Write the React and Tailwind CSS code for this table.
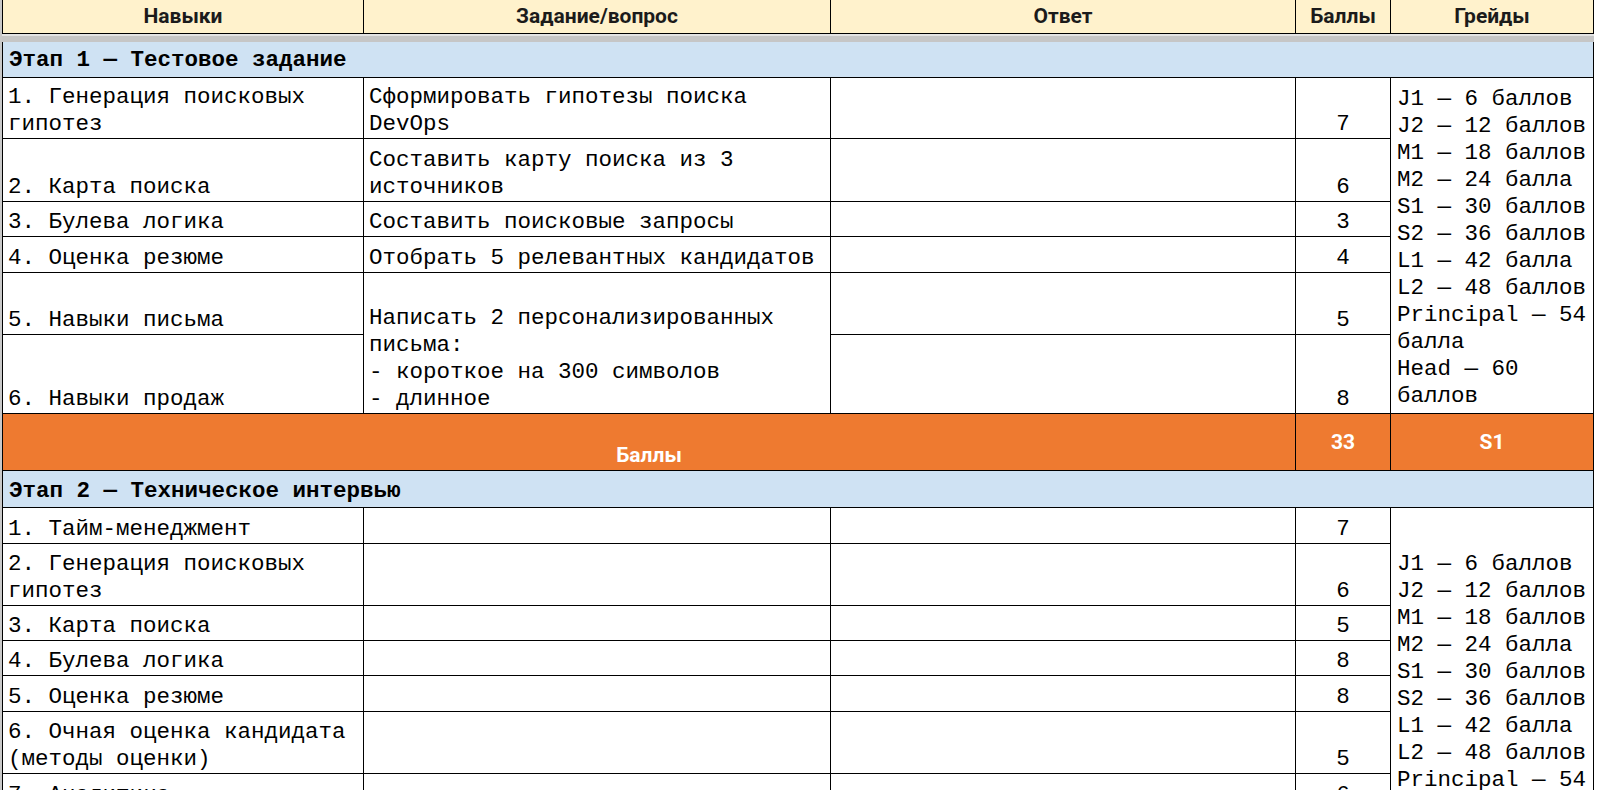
const stage1 = [
  { skill: '1. Генерация поисковых гипотез', task: 'Сформировать гипотезы поиска DevOps', score: 7 },
  { skill: '2. Карта поиска', task: 'Составить карту поиска из 3 источников', score: 6 },
  { skill: '3. Булева логика', task: 'Составить поисковые запросы', score: 3 },
  { skill: '4. Оценка резюме', task: 'Отобрать 5 релевантных кандидатов', score: 4 },
];

const stage2 = [
  { skill: '1. Тайм-менеджмент', score: 7 },
  { skill: '2. Генерация поисковых гипотез', score: 6 },
  { skill: '3. Карта поиска', score: 5 },
  { skill: '4. Булева логика', score: 8 },
  { skill: '5. Оценка резюме', score: 8 },
  { skill: '6. Очная оценка кандидата (методы оценки)', score: 5 },
  { skill: '7. Аналитика', score: 6 },
  { skill: '8. Презентация результатов', score: 5 },
];

const grades = [
  'J1 — 6 баллов',
  'J2 — 12 баллов',
  'M1 — 18 баллов',
  'M2 — 24 балла',
  'S1 — 30 баллов',
  'S2 — 36 баллов',
  'L1 — 42 балла',
  'L2 — 48 баллов',
  'Principal — 54 балла',
  'Head — 60 баллов',
];

function Cell({ children, className = '' }) {
  return (
    <div className={`bg-white flex flex-col justify-end px-[5px] overflow-hidden ${className}`}>
      {children}
    </div>
  );
}

function Grades({ className = '' }) {
  return (
    <Cell className={`pl-[6px] pr-[2px] pb-[3px] ${className}`}>
      {grades.map((g) => (
        <div key={g}>{g}</div>
      ))}
    </Cell>
  );
}

function Row({ r, extra }) {
  return (
    <>
      <Cell>{r.skill}</Cell>
      <Cell>{r.task}</Cell>
      <Cell />
      <Cell className="items-center">{r.score}</Cell>
      {extra}
    </>
  );
}

export default function App() {
  const orange = "bg-[#ee7a30] font-['Roboto',sans-serif] font-bold text-[21px] text-white";
  return (
    <div className="h-[790px] w-[1600px] overflow-hidden bg-white font-['Liberation_Mono',monospace] text-[22.5px] leading-[27px] text-black">
      <div className="flex">
        <div className="w-[2px] shrink-0 bg-[#c9c9c9]" />
        <div className="w-[1592px] shrink-0">
          {/* Header */}
          <div className="grid grid-cols-[360px_466px_464px_94px_202px] h-[34px] gap-x-px bg-black px-px pb-px font-['Roboto',sans-serif] font-bold text-[21px] text-[#1b1b1b]">
            {['Навыки', 'Задание/вопрос', 'Ответ', 'Баллы', 'Грейды'].map((h) => (
              <div key={h} className="bg-[#fff2cc] flex items-center justify-center">
                {h}
              </div>
            ))}
          </div>
          <div className="h-[2px] bg-[#e4e4e4]" />
          <div className="h-[6px] bg-[#c6c6c6]" />

          {/* Body */}
          <div className="grid grid-cols-[360px_466px_464px_94px_202px] grid-rows-[35px_60px_62px_34px_35px_61px_78px_56px_36px_35px_61px_34px_34px_35px_61px_35px_68px] gap-px bg-black px-px pb-px">
            <div className="col-span-5 bg-[#cfe2f3] flex items-center px-[6px] pt-[2px] font-bold">
              Этап 1 — Тестовое задание
            </div>

            {stage1.map((r, i) => (
              <Row key={r.skill} r={r} extra={i === 0 ? <Grades className="row-span-6" /> : null} />
            ))}

            <Cell>5. Навыки письма</Cell>
            <Cell className="row-span-2 whitespace-pre-line">
              {'Написать 2 персонализированных письма:\n- короткое на 300 символов\n- длинное'}
            </Cell>
            <Cell />
            <Cell className="items-center">5</Cell>

            <Cell>6. Навыки продаж</Cell>
            <Cell />
            <Cell className="items-center">8</Cell>

            <div className={`col-span-3 flex items-end justify-center pb-[1px] ${orange}`}>Баллы</div>
            <div className={`flex items-center justify-center ${orange}`}>33</div>
            <div className={`flex items-center justify-center ${orange}`}>S1</div>

            <div className="col-span-5 bg-[#cfe2f3] flex items-center px-[6px] pt-[4px] font-bold">
              Этап 2 — Техническое интервью
            </div>

            {stage2.map((r, i) => (
              <Row key={r.skill} r={r} extra={i === 0 ? <Grades className="row-span-8" /> : null} />
            ))}
          </div>
        </div>
        <div className="flex-1 bg-white" />
      </div>
    </div>
  );
}
